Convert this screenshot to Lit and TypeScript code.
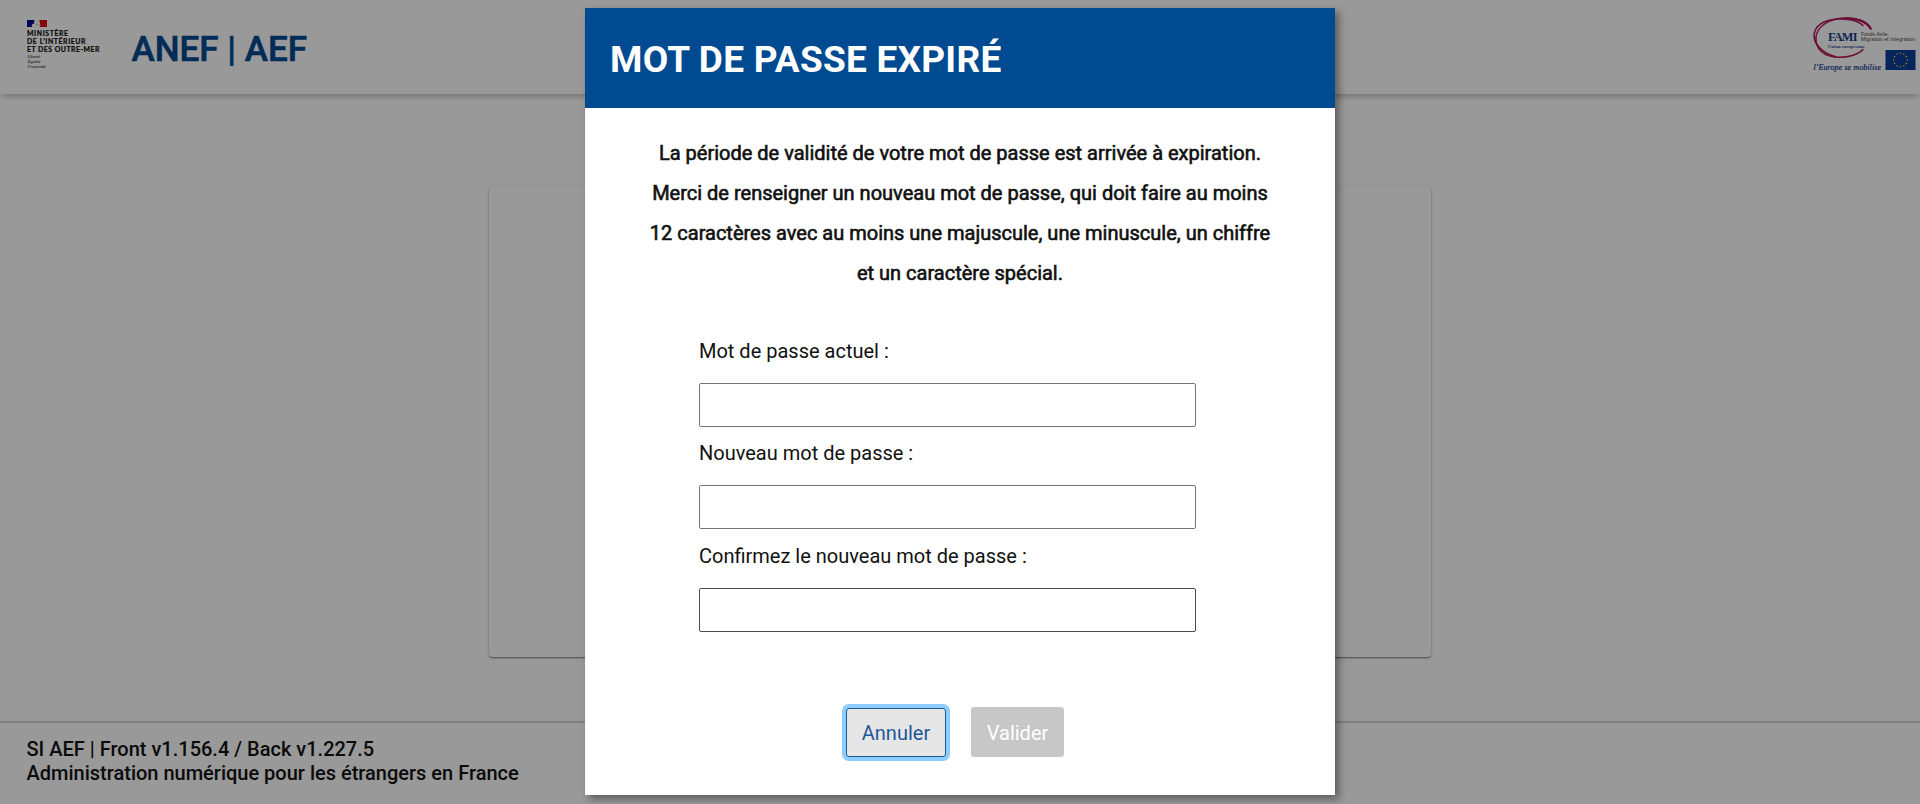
import { LitElement, html, css, svg } from "lit";
import { customElement } from "lit/decorators.js";

const STARS = Array.from({ length: 12 }, (_, i) => {
  const a = (i * Math.PI) / 6;
  return { x: 15 + 6.8 * Math.sin(a), y: 10 - 6.8 * Math.cos(a) };
});

@customElement("ministry-logo")
class MinistryLogo extends LitElement {
  static styles = css`
    :host { display: block; width: 76px; height: 50px; }
    svg { display: block; }
    .name { font: 700 6.9px Lato, sans-serif; fill: #0c0c0c; stroke: #0c0c0c; stroke-width: 0.2px; }
    .motto { font: italic 400 5px "Liberation Serif", serif; fill: #222; }
  `;
  render() {
    return html`<svg width="76" height="50" viewBox="0 0 76 50">
      <rect width="7.5" height="7" fill="#000091" />
      <rect x="7.5" width="5" height="7" fill="#fff" />
      <rect x="12.5" width="7.5" height="7" fill="#e1000f" />
      <path d="M4.5 5.4 L6 3.6 L7.6 4 L8 1.6 Q10 -.2 11.6 1.4 L13.2 3 L12 5.2 L14.2 4.6 L12 7 L5.5 7 Z" fill="#fff" />
      <path d="M9 4 L10.8 3.2 L10.4 5.6 L8.4 6 Z" fill="#b9b9c4" />
      <text class="name" x="0" y="16" textLength="41">MINISTÈRE</text>
      <text class="name" x="0" y="24" textLength="58.5">DE L’INTÉRIEUR</text>
      <text class="name" x="0" y="31.7" textLength="72.5">ET DES OUTRE-MER</text>
      <text class="motto" x="0.5" y="38.2" textLength="12.5">Liberté</text>
      <text class="motto" x="0.5" y="43.2" textLength="13">Égalité</text>
      <text class="motto" x="0.5" y="48" textLength="18.5">Fraternité</text>
    </svg>`;
  }
}

@customElement("fami-logo")
class FamiLogo extends LitElement {
  static styles = css`
    :host { display: block; width: 110px; height: 60px; }
    svg { display: block; }
    .fami { font: 700 12.4px "Liberation Serif", serif; fill: #173f8f; }
    .union { font: 700 5px "Liberation Serif", serif; fill: #4a5fa3; }
    .fund { font: 400 5px "Liberation Sans", sans-serif; fill: #444; }
    .motto { font: italic 400 8px "Liberation Serif", serif; fill: #123a8c; stroke: #123a8c; stroke-width: 0.2px; }
  `;
  render() {
    return html`<svg width="110" height="60" viewBox="0 0 110 60">
      <g fill="none" stroke="#b3175c" stroke-linecap="round">
        <path d="M61 15 C58 7 46 3.5 33 4 C17 5 7 14 6 23 C5 35 14 43 28 43.3 C39 43.5 49 40 53 35.5" stroke-width="1.5" />
        <path d="M53 11.5 C46 5 27 2.5 14 8 C3 13 1.5 24 8 32 C12 37 19 41 26 43" stroke-width="1.6" />
        <path d="M36 4.3 C48 4 57 8.500 60.500 14.500" stroke-width="2.2" />
      </g>
      <text class="fami" x="18" y="26.7" textLength="29.5">FAMI</text>
      <text class="union" x="18" y="34" textLength="37">Union européenne</text>
      <text class="fund" x="51" y="21.7" textLength="28">Fonds Asile,</text>
      <text class="fund" x="51" y="26.8" textLength="54">Migration et Intégration</text>
      <text class="motto" x="3.5" y="55.5" textLength="67.5">l’Europe se mobilise</text>
      <g transform="translate(75.5 36)">
        <rect width="30" height="20" fill="#0b3f9c" />
        ${STARS.map((s) => svg`<circle cx=${s.x} cy=${s.y} r="0.8" fill="#e8d81c" />`)}
      </g>
    </svg>`;
  }
}

@customElement("app-root")
class AppRoot extends LitElement {
  static styles = css`
    :host { display: block; position: relative; height: 804px; overflow: hidden; background: #fff; color: #111; font-family: Roboto, sans-serif; }
    * { box-sizing: border-box; }
    .page { display: flex; flex-direction: column; height: 804px; }
    .header { display: flex; align-items: flex-start; height: 94px; flex: none; padding: 14px 0 0 27px; box-shadow: 0 5px 6px -3px rgba(0, 0, 0, 0.28); }
    .ministry { margin-top: 6px; }
    .brand { flex: 1; margin: 12px 0 0 28.5px; padding-top: 3px; line-height: 42px; font-size: 35px; font-weight: 500; color: #004a91; -webkit-text-stroke: 0.6px #004a91; }
    .main { flex: 1; display: flex; justify-content: center; padding-top: 92px; }
    .card { width: 942px; height: 471px; border-radius: 4px; box-shadow: 0 1px 3px rgba(0, 0, 0, 0.28), 0 1px 1px rgba(0, 0, 0, 0.18), 0 2px 1px -1px rgba(0, 0, 0, 0.15); }
    .footer { flex: none; height: 83px; border-top: 2px solid #d5d5d5; padding: 14px 26.5px; font-size: 20px; line-height: 24px; font-weight: 500; }
    .overlay { position: absolute; inset: 0; display: flex; justify-content: center; align-items: flex-start; padding-top: 8px; background: rgba(0, 0, 0, 0.4); }
    .dialog { width: 750px; height: 787px; background: #fff; box-shadow: 4px 4px 8px rgba(0, 0, 0, 0.4); }
    .title { margin: 0; height: 100px; padding: 0 25px; line-height: 103px; background: #004a91; color: #fff; font-size: 37px; font-weight: 700; letter-spacing: 0.25px; }
    .notice { margin: 25px 0 0; line-height: 40px; font-size: 20px; font-weight: 400; text-align: center; -webkit-text-stroke: 0.6px #111; }
    .notice span { display: block; }
    .form { margin: 31px 0 0 114px; width: 497px; }
    .label { display: block; height: 58.5px; line-height: 40px; padding-top: 6.5px; font-size: 20px; }
    .input { display: block; width: 497px; height: 44px; border: 1px solid #767676; border-radius: 2px; background: #fff; outline: none; }
    .hovered { border-color: #4c4c4c; }
    .actions { display: flex; gap: 25px; margin: 75.5px 0 0 261px; }
    .button { height: 50px; padding: 0; border-radius: 3px; font: 400 20px Roboto, sans-serif; }
    .cancel { width: 100px; height: 49px; margin: 1px 0 0; border: 1px solid #1f5799; background: #e6e6e6; color: #1f5799; box-shadow: 0 0 0 4px #8dcdff; }
    .submit { width: 93px; padding-top: 2px; border: none; background: #c7c7c7; color: #fff; }
  `;
  render() {
    return html`
      <div class="page">
        <header class="header">
          <ministry-logo class="ministry"></ministry-logo>
          <div class="brand">ANEF | AEF</div>
          <fami-logo></fami-logo>
        </header>
        <main class="main"><div class="card"></div></main>
        <footer class="footer">
          <div>SI AEF | Front v1.156.4 / Back v1.227.5</div>
          <div>Administration numérique pour les étrangers en France</div>
        </footer>
      </div>
      <div class="overlay">
        <section class="dialog" role="dialog">
          <h1 class="title">MOT DE PASSE EXPIRÉ</h1>
          <p class="notice">
            <span>La période de validité de votre mot de passe est arrivée à expiration.</span>
            <span>Merci de renseigner un nouveau mot de passe, qui doit faire au moins</span>
            <span>12 caractères avec au moins une majuscule, une minuscule, un chiffre</span>
            <span>et un caractère spécial.</span>
          </p>
          <form class="form">
            <label class="label" for="current">Mot de passe actuel :</label>
            <input class="input" id="current" type="password" />
            <label class="label" for="next">Nouveau mot de passe :</label>
            <input class="input" id="next" type="password" />
            <label class="label" for="confirm">Confirmez le nouveau mot de passe :</label>
            <input class="input hovered" id="confirm" type="password" />
          </form>
          <div class="actions">
            <button class="button cancel" type="button">Annuler</button>
            <button class="button submit" type="button" disabled>Valider</button>
          </div>
        </section>
      </div>
    `;
  }
}
